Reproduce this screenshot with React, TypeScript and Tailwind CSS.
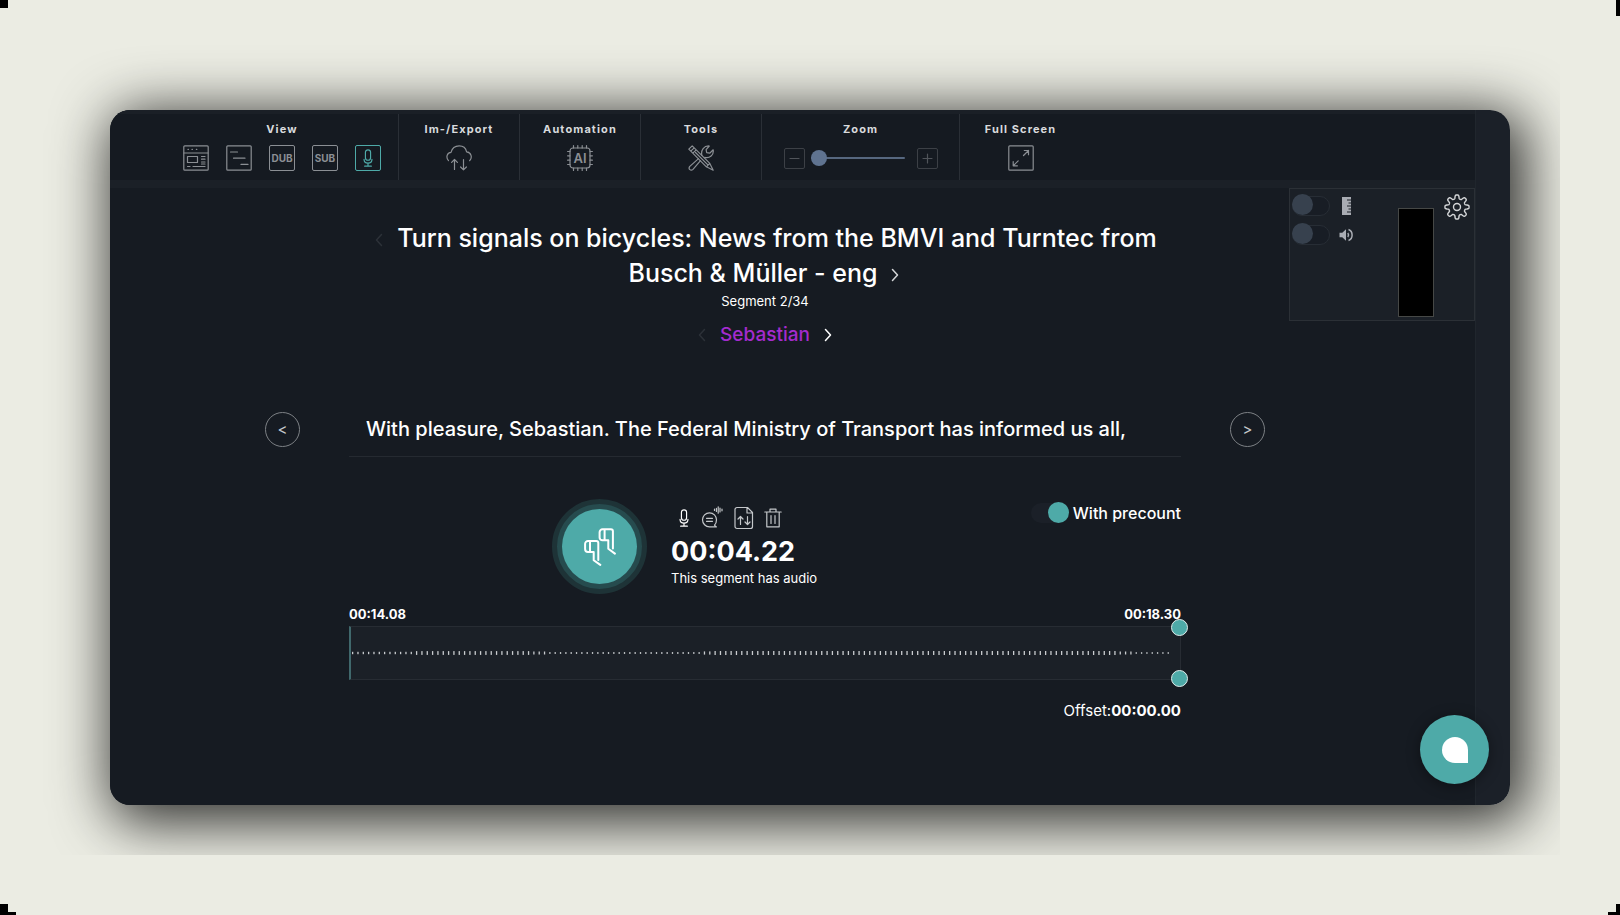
import { useState } from 'react';
import type { ReactNode } from 'react';
import { clsx } from 'clsx';

type IconProps = { className?: string };

const LINE = {
  fill: 'none',
  stroke: 'currentColor',
  strokeWidth: 1.2,
  strokeLinecap: 'round',
  strokeLinejoin: 'round',
} as const;

//====================================== Icons
const LayoutIcon = () => (
  <svg viewBox="0 0 26 26" className="size-[26px]" {...LINE}>
    <rect x="0.8" y="0.8" width="24.4" height="24.4" rx="1" />
    <path d="M1 8h24M5 4.4h.4M9 4.4h.4M13.4 4.4h.4" />
    <rect x="4.5" y="11.5" width="10" height="6" />
    <path d="M18.5 11.5h3.5M18.5 14.2h3.5M18.5 17h3.5M18.5 19h3.5M4.5 21.5h2.5M10 21.5h12" />
  </svg>
);

const TimelineIcon = () => (
  <svg viewBox="0 0 26 26" className="size-[26px]" {...LINE}>
    <rect x="0.8" y="0.8" width="24.4" height="24.4" rx="1" />
    <path d="M4.5 7h7M7.5 13.2h11.5M15 19.4h7" />
  </svg>
);

const MicIcon = ({ className }: IconProps) => (
  <svg viewBox="0 0 12 18.2" className={className} {...LINE}>
    <rect x="3.4" y="0.8" width="5.2" height="10.6" rx="2.6" />
    <path d="M2 10.5c0 2.6 1.6 3.7 4 3.7s4-1.1 4-3.7M6 14.2v3M2.6 17.4h6.8" />
  </svg>
);

const CloudIcon = () => (
  <svg viewBox="0 0 26 26" className="size-[26px]" {...LINE}>
    <path d="M2.5 15.6C-.4 12.4 1 7.8 5 7.4 6 3.4 9.4.9 13.2.9s6.6 2.3 7.4 5.9c4.8.4 6 6 3 8.9" />
    <path d="M8.5 24.5v-10M5.6 17.4l2.9-2.9 2.9 2.9M17.5 14.5v10.3M14.6 22l2.9 2.9 2.9-2.9" />
  </svg>
);

const AiIcon = () => (
  <svg viewBox="0 0 26 26" className="size-[26px]" {...LINE}>
    <rect x="3" y="3" width="20" height="20" rx="3" />
    <path d="M6.5 3V.6M10.8 3V.6M15.2 3V.6M19.5 3V.6M6.5 25.4V23M10.8 25.4V23M15.2 25.4V23M19.5 25.4V23M3 6.5H.6M3 10.8H.6M3 15.2H.6M3 19.5H.6M25.4 6.5H23M25.4 10.8H23M25.4 15.2H23M25.4 19.5H23" />
    <text
      x="13"
      y="17.5"
      textAnchor="middle"
      fontSize="13"
      fontWeight="600"
      fontFamily="Inter, sans-serif"
      fill="currentColor"
      stroke="none"
    >
      AI
    </text>
  </svg>
);

const ToolsIcon = () => (
  <svg viewBox="0 0 26 26" className="size-[26px]" {...LINE}>
    <path d="M.8 4.2 4.2.8l17.6 17.6 3.4 6.8-6.8-3.4zM2.8 6.2l3.4-3.4M4.8 8.2l3.4-3.4M7.5 7.5l12.6 12.6M18.4 21.8l3.4-3.4" />
    <path d="M13.9 10.5c-1.3-5.2 2.1-9.9 7.4-9.5l-3.2 3.6.6 3 3 .6 3.5-3.4c.8 5.2-3.5 8.8-8.5 7.6M10.5 13.6l-8.7 7.8c-2 2.6 1 5 3.2 3l7.5-8.7" />
  </svg>
);

const FullScreenIcon = () => (
  <svg viewBox="0 0 26 26" className="size-[26px]" {...LINE}>
    <rect x="0.8" y="0.8" width="24.4" height="24.4" rx="1" />
    <path d="M15.5 10.5 20.5 5.5M16.3 5.5h4.2v4.2M10.2 15.8l-5 5M5.2 16.6v4.2h4.2" />
  </svg>
);

const SpeechIcon = () => (
  <svg viewBox="0 0 24 24" className="h-6 w-6" {...LINE}>
    <path d="M14.6 20.8H9.5a7 7 0 1 1 7-7c0 2.7-1 4.4-2 5.4l1.9 1.7zM6.5 12.3h6M6.5 15.3h6" />
    <path d="M14.5 3.2v1.2M16.4 2.4v3M18.2.8v6.4M20 2v4M22 3v1.8" />
  </svg>
);

const FileIcon = () => (
  <svg viewBox="0 0 20 24" className="h-6 w-5" {...LINE}>
    <path d="M3 1.5h10.5l5 5V20.5a2 2 0 0 1-2 2H3a2 2 0 0 1-2-2V3.5a2 2 0 0 1 2-2zM13 1.7v5.3h5.3" />
    <path d="M6.5 18.5v-8M4 13l2.5-2.5L9 13M13.5 10.5v8M11 16l2.5 2.5L16 16" />
  </svg>
);

const TrashIcon = () => (
  <svg viewBox="0 0 18 20" className="h-5 w-[18px]" {...LINE}>
    <path d="M.8 4h16.4M6 4V1.2h6V4M2.8 4v14.8h12.4V4M7 7.5v8M11 7.5v8" />
  </svg>
);

// eight soft teeth round the centre
const GEAR_POINTS = Array.from({ length: 160 }, (_, i) => {
  const angle = (i / 160) * Math.PI * 2;
  const radius = 10.2 + 1.9 * Math.tanh(2.2 * Math.cos(angle * 8));
  return `${(13 + radius * Math.sin(angle)).toFixed(2)},${(13 - radius * Math.cos(angle)).toFixed(2)}`;
}).join(' ');

const GearIcon = () => (
  <svg viewBox="0 0 26 26" className="size-[26px]" {...LINE} strokeWidth={1.4}>
    <circle cx="13" cy="13" r="3.5" />
    <polygon points={GEAR_POINTS} />
  </svg>
);

const RulerIcon = () => (
  <svg viewBox="0 0 14 18" className="h-[18px] w-3.5 text-[#a9acb3]">
    <path
      fill="currentColor"
      d="M3 0h9v2.5H8v1h4v2H9.5v1H12v2H8v1h4v2H9.5v1H12v2H8v1h4V18H3z"
    />
  </svg>
);

const SpeakerIcon = () => (
  <svg viewBox="0 0 14 14" className="size-3.5 text-[#a9acb3]">
    <path fill="currentColor" d="M.5 4.8h2.8L7 1.3v11.4L3.3 9.2H.5z" />
    <path
      d="M8.8 5q1.5 2 0 4M9.5 1.5c4.8 1.8 4.8 9.2 0 11"
      fill="none"
      stroke="currentColor"
      strokeWidth="1.5"
    />
  </svg>
);

const QuoteIcon = () => (
  <svg viewBox="0 0 32 38" className="h-[38px] w-8" {...LINE} strokeWidth={2}>
    <path d="M24.3 12.3h-5.8a2.9 2.9 0 0 1-2.9-2.9V4.2a2.9 2.9 0 0 1 2.9-2.9h8.4a2 2 0 0 1 2 2V20.5M20.6 1.3v11M24.3 12.3v8.5l6.6 4.8" />
    <path d="M9.7 24H4a2.9 2.9 0 0 1-2.9-2.9v-5.2A2.9 2.9 0 0 1 4 13h8.3a2 2 0 0 1 2 2v17M6 13v11M9.7 24v8.2l6.6 4.7" />
  </svg>
);

const Chevron = ({ className, left }: IconProps & { left?: boolean }) => (
  <svg viewBox="0 0 12 14" className={clsx('h-3.5 w-3', className)} {...LINE} strokeWidth={1.5}>
    <path d={left ? 'M8.5 1.5 3.5 7l5 5.5' : 'M3.5 1.5 8.5 7l-5 5.5'} />
  </svg>
);

//====================================== Toolbar
type GroupProps = { title: string; children: ReactNode; className: string; last?: boolean };

const ToolGroup = ({ title, children, className, last }: GroupProps) => (
  <div
    className={clsx(
      'flex shrink-0 flex-col items-center gap-2 pt-[7px]',
      !last && 'border-r border-[#2a2f36]',
      className
    )}
  >
    <span className="text-[11px] leading-4 font-bold tracking-widest text-[#d9dbdd]">{title}</span>
    <div className="flex h-[26px] w-full items-center justify-center text-[#8b8f94]">{children}</div>
  </div>
);

const ToolButton = ({ label, children, className }: { label: string; children: ReactNode; className?: string }) => (
  <button type="button" aria-label={label} className={clsx('flex size-[26px] items-center justify-center', className)}>
    {children}
  </button>
);

const Toolbar = () => {
  const [zoom, setZoom] = useState(0);

  return (
    <header className="flex h-[70px] border-t-4 border-[#1a1f26] bg-[#151a21] pl-14">
      <ToolGroup title="View" className="w-[233px]">
        <div className="flex gap-[17px]">
          <ToolButton label="Editor view">
            <LayoutIcon />
          </ToolButton>
          <ToolButton label="Timeline view">
            <TimelineIcon />
          </ToolButton>
          <ToolButton label="Dub view" className="rounded-xs border border-current text-[10px] font-bold">
            DUB
          </ToolButton>
          <ToolButton label="Subtitle view" className="rounded-xs border border-current text-[10px] font-bold">
            SUB
          </ToolButton>
          <ToolButton label="Record view" className="rounded-xs border border-current text-[#4eaaa8]">
            <MicIcon className="h-[18px] w-3" />
          </ToolButton>
        </div>
      </ToolGroup>
      <ToolGroup title="Im-/Export" className="w-[121px]">
        <ToolButton label="Import or export">
          <CloudIcon />
        </ToolButton>
      </ToolGroup>
      <ToolGroup title="Automation" className="w-[121px]">
        <ToolButton label="Automation">
          <AiIcon />
        </ToolButton>
      </ToolGroup>
      <ToolGroup title="Tools" className="w-[121px]">
        <ToolButton label="Tools">
          <ToolsIcon />
        </ToolButton>
      </ToolGroup>
      <ToolGroup title="Zoom" className="w-[198px]">
        <div className="flex items-center gap-1.5">
          <button
            type="button"
            aria-label="Zoom out"
            className="flex size-[21px] items-center justify-center rounded-xs border border-[#3c4046] text-[#50545a]"
          >
            <svg viewBox="0 0 11 11" className="size-[11px]" {...LINE}>
              <path d="M1 5.5h9" />
            </svg>
          </button>
          <input
            type="range"
            aria-label="Zoom"
            min={0}
            max={100}
            value={zoom}
            onChange={(e) => setZoom(Number(e.target.value))}
            className="mr-1.5 h-4 w-[94px] appearance-none bg-transparent [&::-webkit-slider-runnable-track]:h-0.5 [&::-webkit-slider-runnable-track]:rounded-full [&::-webkit-slider-runnable-track]:bg-[#56677f] [&::-webkit-slider-thumb]:-mt-[7px] [&::-webkit-slider-thumb]:size-4 [&::-webkit-slider-thumb]:appearance-none [&::-webkit-slider-thumb]:rounded-full [&::-webkit-slider-thumb]:bg-[#5f7390]"
          />
          <button
            type="button"
            aria-label="Zoom in"
            className="flex size-[21px] items-center justify-center rounded-xs border border-[#3c4046] text-[#50545a]"
          >
            <svg viewBox="0 0 11 11" className="size-[11px]" {...LINE}>
              <path d="M1 5.5h9M5.5 1v9" />
            </svg>
          </button>
        </div>
      </ToolGroup>
      <ToolGroup title="Full Screen" className="w-[121px]" last>
        <ToolButton label="Full screen">
          <FullScreenIcon />
        </ToolButton>
      </ToolGroup>
    </header>
  );
};

//====================================== Level meter
const MeterToggle = ({ label, icon }: { label: string; icon: ReactNode }) => (
  <label className="flex h-[29px] items-center gap-[9px]">
    <input
      type="checkbox"
      aria-label={label}
      className="h-5 w-[38px] appearance-none rounded-full border border-[#272d35] bg-[#181d25] before:-mt-[3px] before:-ml-px before:block before:size-[21px] before:rounded-full before:bg-[#37414e] checked:before:ml-4 checked:before:bg-[#4eaaa8]"
    />
    {icon}
  </label>
);

const MeterPanel = () => (
  <aside className="flex h-[133px] w-[186px] shrink-0 border border-[#2b3036] bg-[#1b2027] pr-1 pl-0.5">
    <div className="flex-1 pt-0.5">
      <MeterToggle label="Show ruler" icon={<RulerIcon />} />
      <MeterToggle label="Sound" icon={<SpeakerIcon />} />
    </div>
    <div className="mt-[19px] h-[109px] w-9 border border-[#464846] bg-black" />
    <button type="button" aria-label="Settings" className="mt-[5px] ml-2.5 size-[26px] text-[#d4d6d8]">
      <GearIcon />
    </button>
  </aside>
);

//====================================== Recorder
const WAVE_STEP = 5.35;

// half height of the tick at the given index
const tickSize = (i: number) => {
  if (i < 12) return 1.2;
  if (i < 34) return 1.9;
  if (i < 37) return 1.5;
  if (i < 66) return 0.9;
  if (i < 68) return 1.6;
  if (i < 144) return 2;
  if (i < 147) return 1.5;
  return 0.8;
};

const Waveform = () => (
  <svg viewBox="0 0 832 52" preserveAspectRatio="none" className="block h-full w-full">
    {Array.from({ length: 154 }, (_, i) => (
      <rect
        key={i}
        x={1 + i * WAVE_STEP}
        y={26 - tickSize(i)}
        width="1.3"
        height={tickSize(i) * 2}
        fill="#c9cccf"
      />
    ))}
  </svg>
);

const StepButton = ({ label, children }: { label: string; children: ReactNode }) => (
  <button
    type="button"
    aria-label={label}
    className="flex size-[35px] shrink-0 items-center justify-center rounded-full border border-[#7d8185] pt-0.5 text-[15px] text-[#c4c7ca]"
  >
    {children}
  </button>
);

const Handle = ({ className }: IconProps) => (
  <span className={clsx('absolute -right-2 size-[17px] rounded-full border border-[#dfeceb] bg-[#4eaaa8]', className)} />
);

const Recorder = () => {
  const [text, setText] = useState('With pleasure, Sebastian. The Federal Ministry of Transport has informed us all,');
  const [precount, setPrecount] = useState(true);

  return (
    <main className="flex min-w-0 flex-1 flex-col px-6 text-white">
      <div className="flex flex-col items-center pt-[33px] text-center">
        <h1 className="max-w-[832px] text-[25px] leading-[35px] font-medium">
          <Chevron left className="mr-3 inline-block align-baseline text-[#2c3138]" />
          Turn signals on bicycles: News from the BMVI and Turntec from Busch &amp; Müller - eng
          <Chevron className="ml-3 inline-block align-baseline text-[#d4d6d8]" />
        </h1>
        <p className="text-[13px] leading-5">Segment 2/34</p>
        <div className="mt-2.5 flex items-center gap-3 text-[19px] leading-7 font-medium">
          <Chevron left className="text-[#2c3138]" />
          <span className="text-[#a42bce]">Sebastian</span>
          <Chevron />
        </div>
      </div>

      <div className="mt-[52px] flex items-center justify-between">
        <StepButton label="Previous segment">&lt;</StepButton>
        <input
          type="text"
          aria-label="Segment text"
          value={text}
          onChange={(e) => setText(e.target.value)}
          className="mx-[49px] h-14 min-w-0 flex-1 border-b border-[#252a31] px-[17px] text-[20px] font-medium outline-none"
        />
        <StepButton label="Next segment">&gt;</StepButton>
      </div>

      <div className="mx-[84px] mt-[42px] flex items-start">
        <div className="flex flex-1 items-center gap-6 pl-[203px]">
          <button
            type="button"
            aria-label="Record"
            className="flex size-[95px] items-center justify-center rounded-full border-5 border-[#1e3337] bg-[#264b4e]"
          >
            <span className="flex size-[75px] items-center justify-center rounded-full bg-[#4eaaa8]">
              <QuoteIcon />
            </span>
          </button>
          <div>
            <div className="flex items-center gap-2.5 pl-[7px] text-[#c4c7ca]">
              <button type="button" aria-label="Voice">
                <MicIcon className="h-[18px] w-3 text-white" />
              </button>
              <button type="button" aria-label="Synthesise speech">
                <SpeechIcon />
              </button>
              <button type="button" aria-label="Import or export audio">
                <FileIcon />
              </button>
              <button type="button" aria-label="Delete audio">
                <TrashIcon />
              </button>
            </div>
            <div className="mt-1.5 text-[27px] leading-8 font-bold">00:04.22</div>
            <div className="text-[13px] leading-5">This segment has audio</div>
          </div>
        </div>
        <label className="mt-0.5 flex items-center gap-1 text-[16px] leading-6 font-medium">
          <input
            type="checkbox"
            checked={precount}
            onChange={(e) => setPrecount(e.target.checked)}
            className="h-5 w-[38px] appearance-none rounded-full bg-[#1b2028] before:-mt-px before:block before:size-[21px] before:rounded-full before:bg-[#37414e] checked:before:ml-[17px] checked:before:bg-[#4eaaa8]"
          />
          With precount
        </label>
      </div>

      <div className="mx-[84px] mt-2.5">
        <div className="flex justify-between text-[13px] leading-5 font-bold">
          <span>00:14.08</span>
          <span>00:18.30</span>
        </div>
        <div className="relative mt-0.5 h-[54px] border border-l-2 border-[#272c33] border-l-[#40686c] bg-[#1b2027]">
          <Waveform />
          <Handle className="-top-2" />
          <Handle className="-bottom-2" />
        </div>
        <p className="mt-[19px] text-right text-[15px] leading-6">
          Offset:<strong>00:00.00</strong>
        </p>
      </div>
    </main>
  );
};

//====================================== Page
const App = () => (
  <div className="relative min-h-screen overflow-hidden bg-[#ebece3] font-[Inter,sans-serif]">
    <span className="absolute top-0 left-0 size-2 bg-black" />
    <span className="absolute top-0 right-0 h-4 w-1 bg-black" />
    <span className="absolute bottom-0 left-0 h-[11px] w-2 bg-black" />
    <span className="absolute bottom-0 left-0 h-[3px] w-4 bg-black" />
    <span className="absolute right-0 bottom-0 h-[11px] w-1 bg-black" />
    <span className="absolute right-0 bottom-0 h-[3px] w-3 bg-black" />

    <div className="mr-[60px] overflow-hidden pt-[110px] pr-[50px] pb-[50px] pl-[110px]">
      <div className="relative rounded-[20px] shadow-[8px_10px_56px_8px_rgba(0,0,0,0.8)]">
        <div className="flex h-[calc(100vh-220px)] min-h-[620px] overflow-hidden rounded-[20px] bg-[#1b2028]">
          <div className="flex min-w-0 flex-1 flex-col">
            <Toolbar />
            <div className="h-2 shrink-0 bg-[#1b2027]" />
            <div className="flex flex-1 bg-[#161b22] pl-[131px]">
              <Recorder />
              <MeterPanel />
            </div>
          </div>
          <div className="w-[35px] shrink-0 border-l border-[#20262d]" />
        </div>

        <button
          type="button"
          aria-label="Open chat"
          className="absolute right-[21px] bottom-[21px] flex size-[69px] items-center justify-center rounded-full bg-[#4eaaa8] shadow-[0_2px_14px_rgba(0,0,0,0.4)]"
        >
          <span className="size-[26px] rounded-t-full rounded-bl-full bg-white" />
        </button>
      </div>
    </div>
  </div>
);

export default App;
